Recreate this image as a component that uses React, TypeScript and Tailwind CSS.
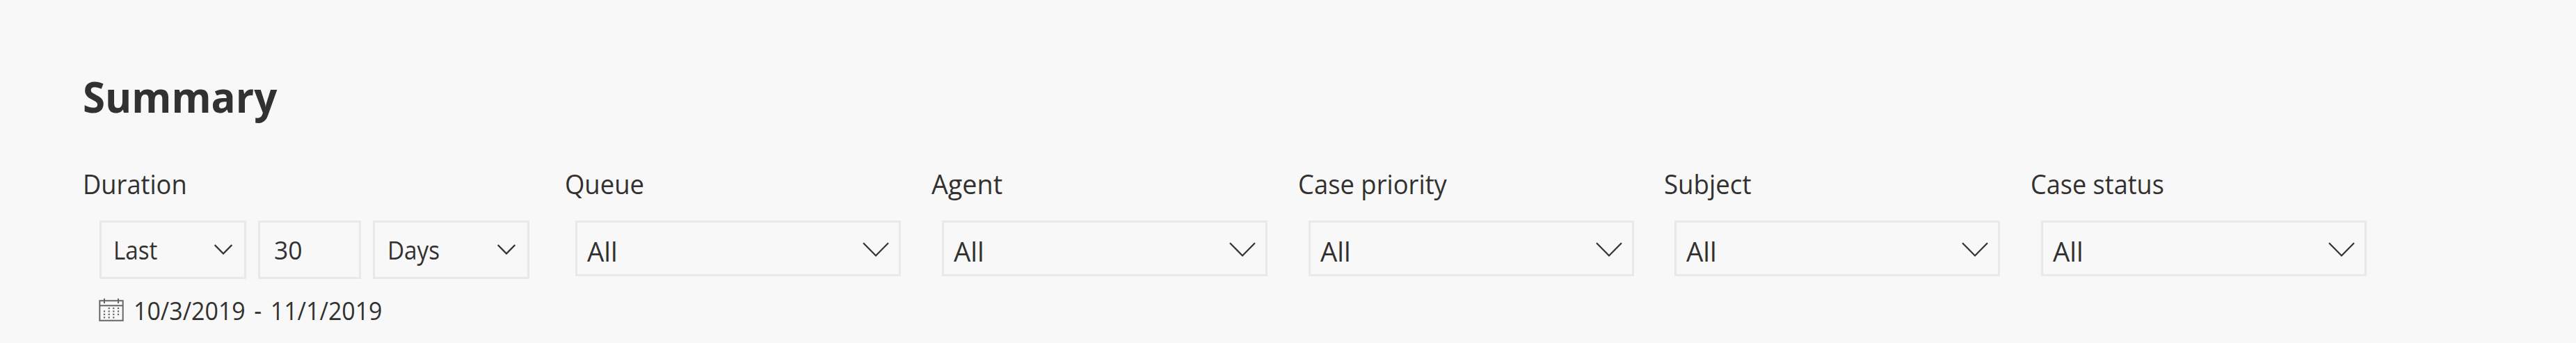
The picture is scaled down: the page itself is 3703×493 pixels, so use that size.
const filters = [
  { label: "Queue", width: "scale-x-[.935]" },
  { label: "Agent", width: "scale-x-[.968]" },
  { label: "Case priority", width: "scale-x-[.933]" },
  { label: "Subject", width: "scale-x-[.94]" },
  { label: "Case status", width: "scale-x-[.925]" },
];

function Chevron({ className }: { className: string }) {
  return (
    <svg viewBox="0 0 38 21" fill="none" stroke="currentColor" className={className}>
      <path d="M1 1.2 19 19.4 37 1.2" strokeWidth="2.2" vectorEffect="non-scaling-stroke" />
    </svg>
  );
}

function CalendarIcon() {
  const rows = [
    [14.7, 21.3, 28],
    [8, 14.7, 21.3, 28],
    [8, 14.7, 21.3, 28],
    [8, 14.7, 21.3],
  ];

  return (
    <svg width="36" height="34" viewBox="0 0 36 34" fill="none" stroke="#666" strokeWidth="2">
      <path d="M1.3 3.3h33.4v28.4H1.3zM1.3 10.2h33.4M8 0v7M28 0v7" />
      {rows.map((row, i) =>
        row.map((x) => (
          <rect key={`${i}-${x}`} x={x - 1.1} y={13 + i * 4.4} width="2.2" height="2.2" fill="#666" stroke="none" />
        ))
      )}
    </svg>
  );
}

function Label({ children, width }: { children: string; width: string }) {
  return (
    <div className={`w-max origin-left whitespace-nowrap text-[39px] leading-[40px] ${width}`}>{children}</div>
  );
}

function Filter({ label, width }: { label: string; width: string }) {
  return (
    <div>
      <Label width={width}>{label}</Label>
      <button className="mt-[33px] ml-[15px] flex h-20 w-[468px] items-center justify-between border-3 border-[#e9e9e9] pr-[14px] pl-[14px]">
        <span className="pt-[7px] text-[38.5px] leading-[40px]">All</span>
        <Chevron className="mt-[3px] h-[21px] w-[38px]" />
      </button>
    </div>
  );
}

function SmallSelect({ value, className }: { value: string; className: string }) {
  return (
    <button className={`flex h-[84px] items-center justify-between border-3 border-[#e9e9e9] pr-[17px] ${className}`}>
      <span className="origin-left scale-x-[.91]">{value}</span>
      <Chevron className="mb-px h-[15px] w-[26px]" />
    </button>
  );
}

export default function App() {
  return (
    <main className="h-[493px] w-full overflow-hidden bg-[#f8f8f8] pt-[109px] pl-[119px] font-['Open_Sans',sans-serif] text-[#323130]">
      <h1 className="w-max origin-left scale-x-[.97] text-[60px] leading-[60px] font-bold">Summary</h1>

      <div className="mt-[75px] grid grid-cols-[693px_527px_527px_526px_527px_1fr]">
        <div>
          <Label width="scale-x-[.93]">Duration</Label>
          <div className="mt-[33px] ml-6 flex text-[36.5px] leading-[40px]">
            <SmallSelect value="Last" className="w-[211px] pl-[17px]" />
            <div className="ml-[17px] flex h-[84px] w-[148px] items-center border-3 border-[#e9e9e9] pl-[20px] text-[37px]">
              <span className="origin-left scale-x-[.96]">30</span>
            </div>
            <SmallSelect value="Days" className="ml-[17px] w-[225px] pl-[18px]" />
          </div>
          <div className="mt-[25px] ml-[23px] flex items-center gap-[14px] text-[36.5px] leading-[40px]">
            <CalendarIcon />
            <span className="origin-left scale-x-[.93] [word-spacing:4px]">10/3/2019 - 11/1/2019</span>
          </div>
        </div>

        {filters.map((filter) => (
          <Filter key={filter.label} {...filter} />
        ))}
      </div>
    </main>
  );
}
